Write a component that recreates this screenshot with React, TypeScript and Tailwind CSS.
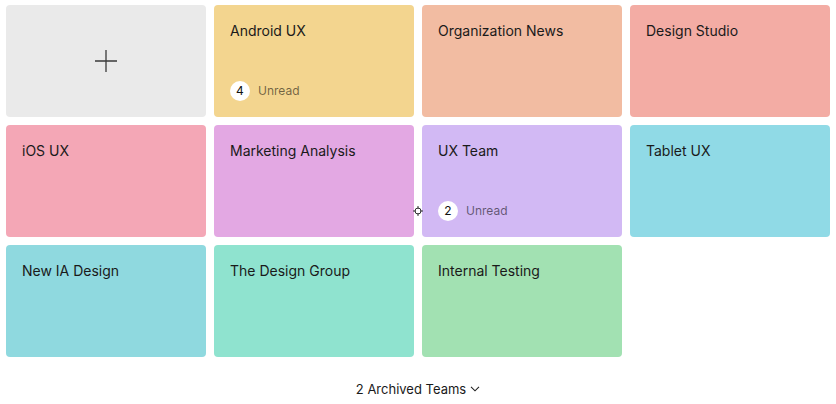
type Team = { name: string; color: string; unread?: number };

const teams: Team[] = [
  { name: "Android UX", color: "bg-[#f3d58f]", unread: 4 },
  { name: "Organization News", color: "bg-[#f2bca2]" },
  { name: "Design Studio", color: "bg-[#f3aca4]" },
  { name: "iOS UX", color: "bg-[#f4a7b6]" },
  { name: "Marketing Analysis", color: "bg-[#e3a8e3]" },
  { name: "UX Team", color: "bg-[#d2b9f4]", unread: 2 },
  { name: "Tablet UX", color: "bg-[#90dae6]" },
  { name: "New IA Design", color: "bg-[#8fd9df]" },
  { name: "The Design Group", color: "bg-[#8fe3cf]" },
  { name: "Internal Testing", color: "bg-[#a2e1b2]" },
];

function TeamCard({ team }: { team: Team }) {
  return (
    <div
      className={`relative h-[112px] rounded-[4px] ${team.color} flex flex-col justify-between px-4 pt-4 pb-4`}
    >
      <div className="text-[14px] leading-5 text-[#1a1a1a]">{team.name}</div>
      {team.unread !== undefined && (
        <div className="flex items-center gap-2">
          <span className="w-5 h-5 rounded-full bg-white flex items-center justify-center text-[12px] text-[#111]">
            {team.unread}
          </span>
          <span className="text-[12px] text-black/55">Unread</span>
        </div>
      )}
      {team.name === "UX Team" && (
        <svg
          className="absolute left-[-9px] top-[81px]"
          width="10"
          height="10"
          viewBox="0 0 10 10"
          fill="none"
          stroke="#333"
          strokeWidth="1"
        >
          <circle cx="5" cy="5" r="3" />
          <path d="M5 0v3M5 7v3M0 5h3M7 5h3" />
        </svg>
      )}
    </div>
  );
}

export default function App() {
  return (
    <div
      className="w-[836px] h-[404px] bg-white px-[6px] pt-[5px]"
      style={{ fontFamily: "Inter, 'Noto Sans', sans-serif" }}
    >
      <div className="grid grid-cols-4 gap-2">
        <div className="h-[112px] rounded-[4px] bg-[#eaeaea] flex items-center justify-center">
          <svg width="22" height="22" viewBox="0 0 22 22" stroke="#3a3a3a" strokeWidth="1.3">
            <path d="M11 0v22M0 11h22" />
          </svg>
        </div>
        {teams.map((t) => (
          <TeamCard key={t.name} team={t} />
        ))}
      </div>
      <div className="mt-[22px] flex items-center justify-center gap-[4px] text-[13px] leading-5 text-[#1a1a1a]">
        <span>2 Archived Teams</span>
        <svg width="10" height="6" viewBox="0 0 10 6" fill="none" stroke="#222" strokeWidth="1.1">
          <path d="M1 0.8l4 4 4-4" />
        </svg>
      </div>
    </div>
  );
}
